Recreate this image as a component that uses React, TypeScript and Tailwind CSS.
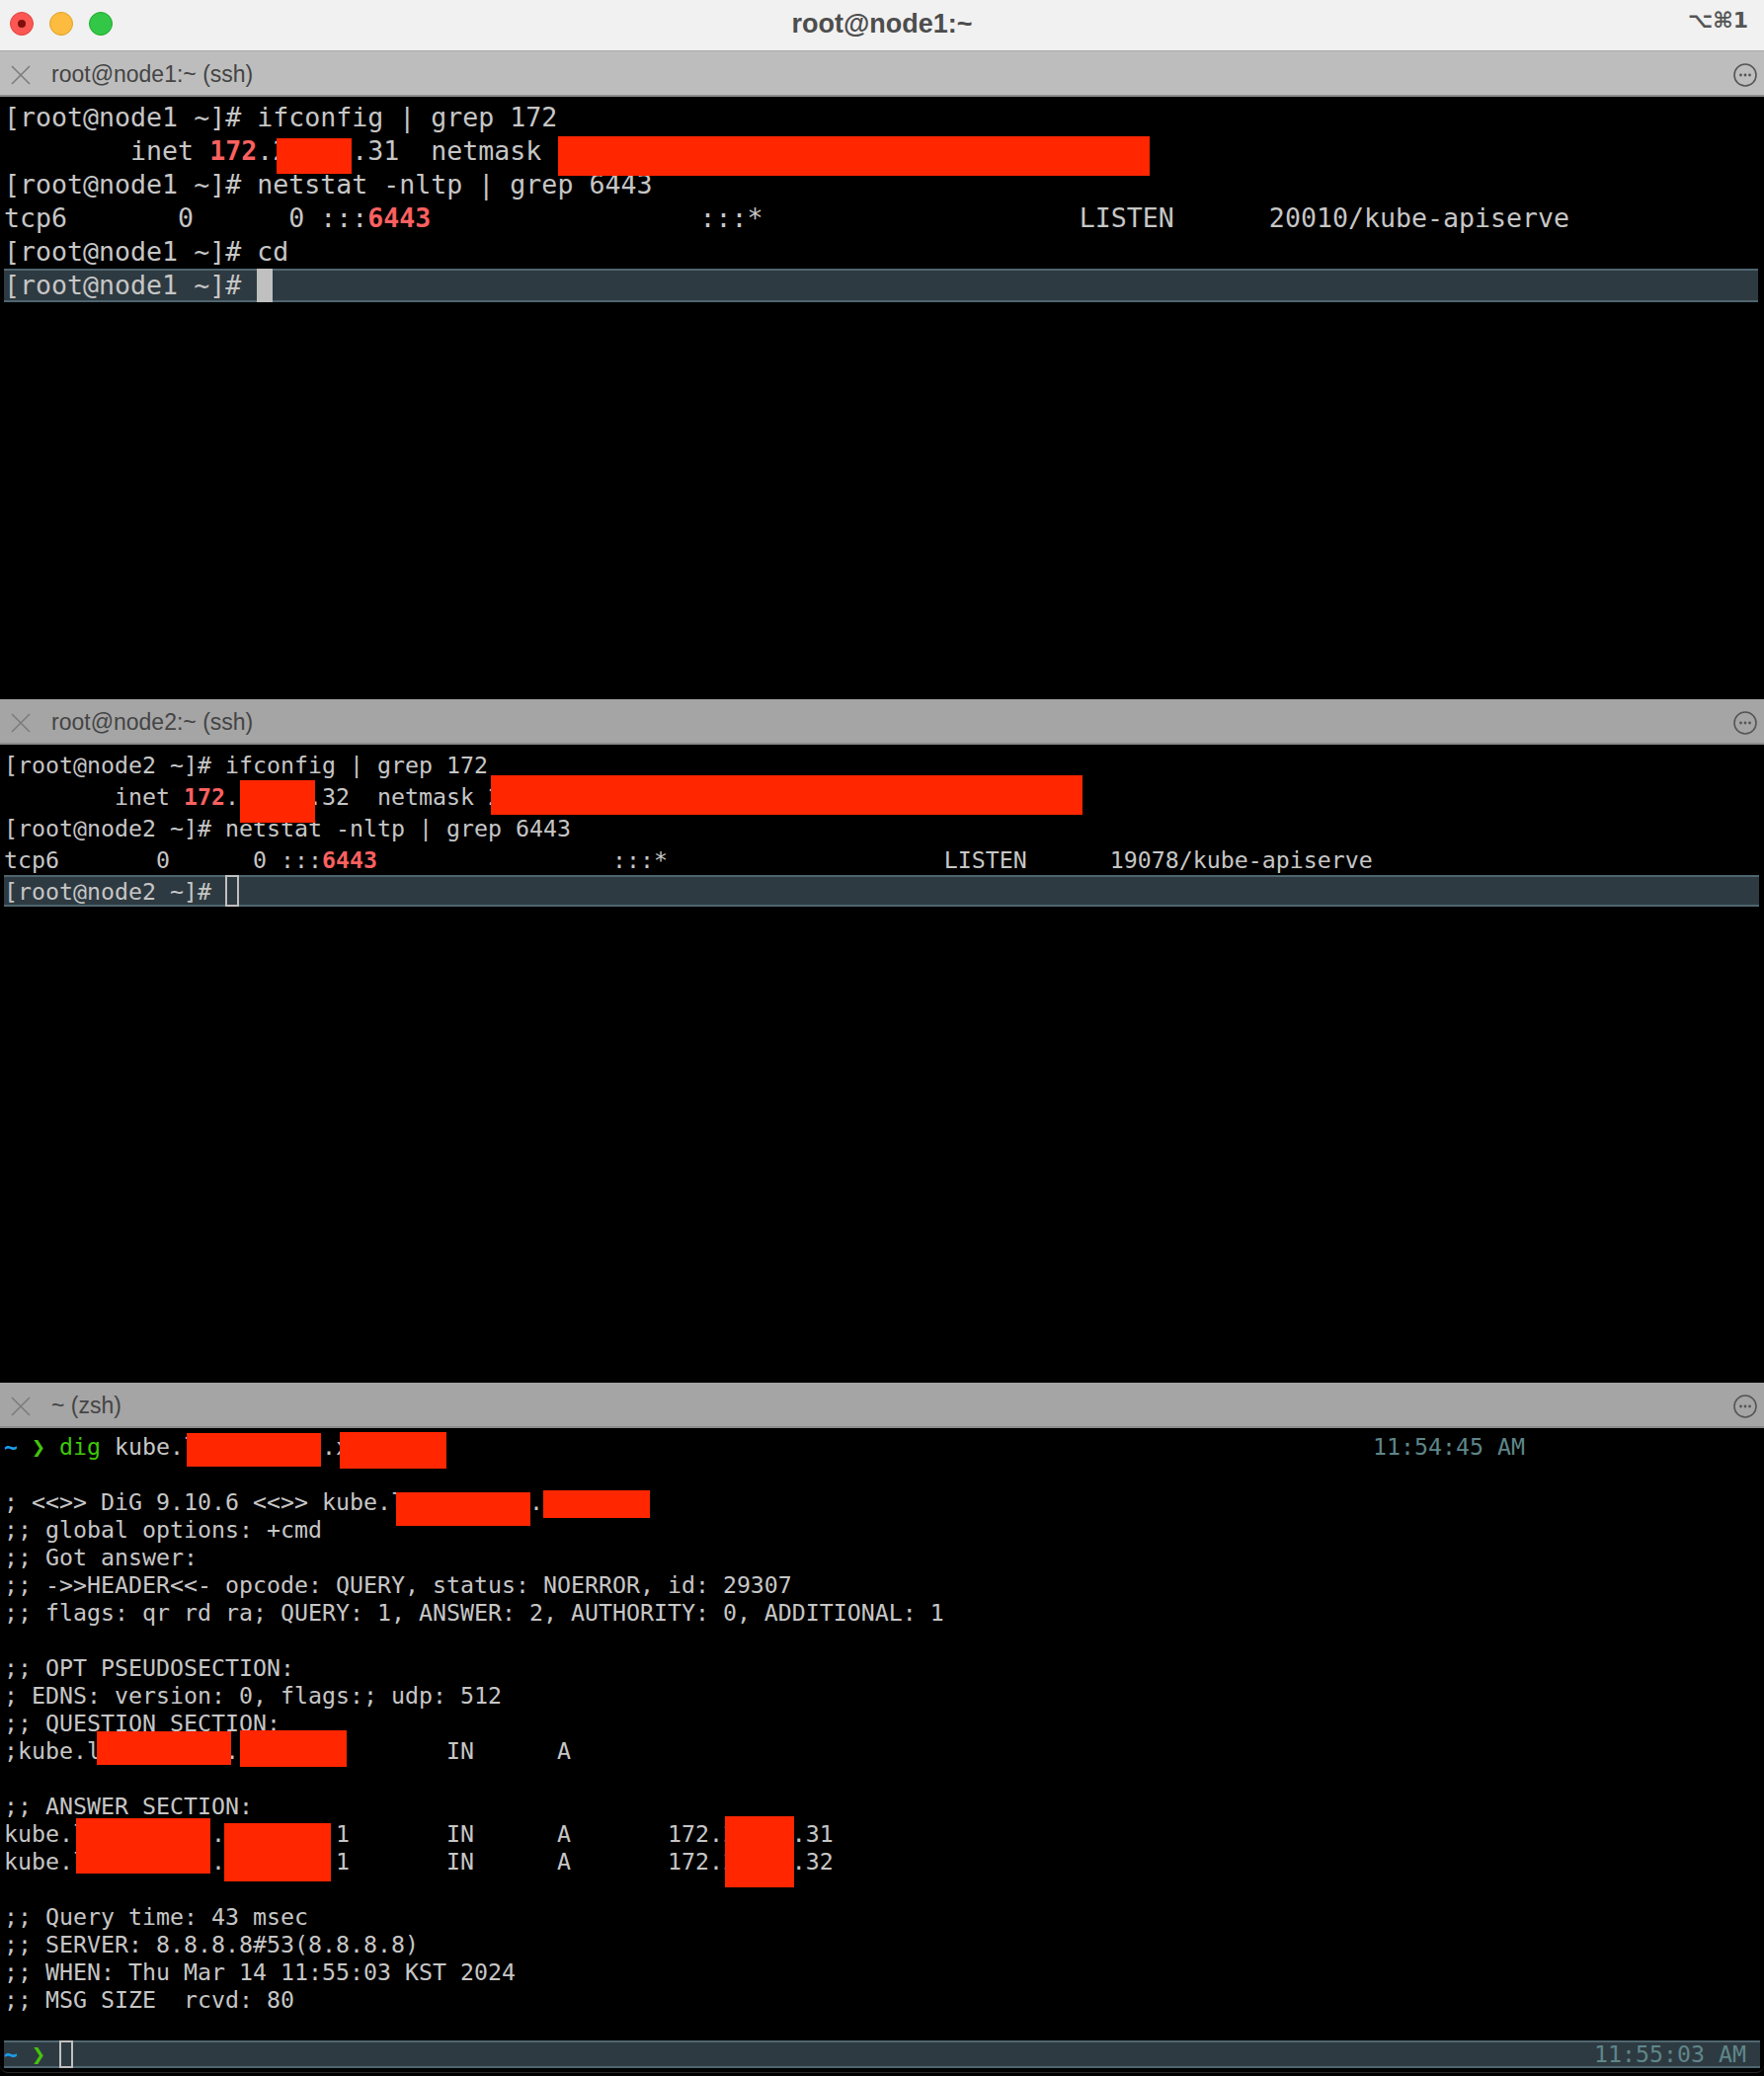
import type { ReactNode } from 'react';

function CloseIcon() {
  return (
    <svg width="22" height="22" viewBox="0 0 22 22" fill="none" stroke="#7c7c7c" strokeWidth="1.6">
      <path d="M2 2l18 18M20 2L2 20" />
    </svg>
  );
}

function MoreIcon() {
  return (
    <svg width="24" height="24" viewBox="0 0 24 24" fill="none">
      <circle cx="12" cy="12" r="11" stroke="#555" strokeWidth="1.6" />
      <circle cx="7.5" cy="12" r="1.4" fill="#555" />
      <circle cx="12" cy="12" r="1.4" fill="#555" />
      <circle cx="16.5" cy="12" r="1.4" fill="#555" />
    </svg>
  );
}

function TabBar({ title, active }: { title: string; active?: boolean }) {
  return (
    <div
      className={`flex h-[46px] items-center border-b-2 border-[#8c8c8c] pt-[3px] pr-[7px] pl-[10px] ${
        active ? 'bg-[#bdbdbd]' : 'bg-[#a5a5a5]'
      }`}
    >
      <CloseIcon />
      <span className="ml-[20px] font-['Liberation_Sans',sans-serif] text-[23px] text-[#444]">{title}</span>
      <div className="ml-auto">
        <MoreIcon />
      </div>
    </div>
  );
}

function Hot({ children }: { children: ReactNode }) {
  return <span className="font-bold text-[#fb6060]">{children}</span>;
}

function ZshPrompt() {
  return (
    <span>
      <span className="font-bold text-[#1c9ce6]">~</span> <span className="text-[#45c40c]">❯</span>{' '}
    </span>
  );
}

export default function App() {
  return (
    <div className="relative flex h-[2102px] w-[1786px] flex-col overflow-hidden bg-black font-['DejaVu_Sans_Mono',monospace] whitespace-pre text-[#c6c6c6]">
      {/* window title bar */}
      <div className="relative flex h-[52px] items-center border-b border-[#a8a8a8] bg-[#f1f1f1] pb-[3px] pl-[10px]">
        <div className="flex gap-[16px]">
          <div className="flex size-[24px] items-center justify-center rounded-full border border-[#e0443e] bg-[#fc5753]">
            <div className="size-[8px] rounded-full bg-[#7e0f0b]" />
          </div>
          <div className="size-[24px] rounded-full border border-[#dea123] bg-[#fdbc40]" />
          <div className="size-[24px] rounded-full border border-[#1aab29] bg-[#33c748]" />
        </div>
        <span className="absolute inset-x-0 text-center font-['Liberation_Sans',sans-serif] text-[27px] font-bold text-[#4d4d4d]">
          root@node1:~
        </span>
        <span className="absolute top-[6px] right-[16px] font-['DejaVu_Sans',sans-serif] text-[22px] leading-[30px] font-bold text-[#555]">
          ⌥⌘1
        </span>
      </div>

      {/* top pane */}
      <TabBar title="root@node1:~ (ssh)" active />
      <div className="h-[610px] pt-1 text-[26.6px] leading-[34px]">
        <div className="pl-1">[root@node1 ~]# ifconfig | grep 172</div>
        <div className="pl-1">
          {'        inet '}
          <Hot>172</Hot>
          {'.2    .31  netmask'}
        </div>
        <div className="pl-1">[root@node1 ~]# netstat -nltp | grep 6443</div>
        <div className="pl-1">
          {'tcp6       0      0 :::'}
          <Hot>6443</Hot>
          {'                 :::*                    LISTEN      20010/kube-apiserve'}
        </div>
        <div className="pl-1">[root@node1 ~]# cd</div>
        <div className="ml-1 flex h-[34px] w-[1776px] border-y-2 border-[#4f6670] bg-[#2e3a41] leading-[30px]">
          <span>[root@node1 ~]# </span>
          <div className="-my-[2px] h-[34px] w-[16px] bg-[#c0c0c0]" />
        </div>
      </div>

      {/* middle pane */}
      <TabBar title="root@node2:~ (ssh)" />
      <div className="h-[646px] pt-[5px] text-[23.25px] leading-[32px]">
        <div className="pl-1">[root@node2 ~]# ifconfig | grep 172</div>
        <div className="pl-1">
          {'        inet '}
          <Hot>172</Hot>
          {'.     .32  netmask 2'}
        </div>
        <div className="pl-1">[root@node2 ~]# netstat -nltp | grep 6443</div>
        <div className="pl-1">
          {'tcp6       0      0 :::'}
          <Hot>6443</Hot>
          {'                 :::*                    LISTEN      19078/kube-apiserve'}
        </div>
        <div className="-mt-px ml-1 flex h-[32px] w-[1777px] border-y-2 border-[#4f6670] bg-[#2e3a41] leading-[30px]">
          <span>[root@node2 ~]# </span>
          <div className="-my-[2px] h-[32px] w-[14px] border-2 border-[#c0c0c0]" />
        </div>
      </div>

      {/* bottom pane */}
      <TabBar title="~ (zsh)" />
      <div className="h-[656px] pt-[5px] text-[23.25px] leading-[28px]">
        <div className="flex pr-[242px] pl-1">
          <span>
            <ZshPrompt />
            <span className="text-[#3fc808]">dig</span> kube.l         .x
          </span>
          <span className="ml-auto text-[#5f8689]">11:54:45 AM</span>
        </div>
        <div className="h-[28px]" />
        <div className="pl-1">{'; <<>> DiG 9.10.6 <<>> kube.l         .'}</div>
        <div className="pl-1">;; global options: +cmd</div>
        <div className="pl-1">;; Got answer:</div>
        <div className="pl-1">;; -&gt;&gt;HEADER&lt;&lt;- opcode: QUERY, status: NOERROR, id: 29307</div>
        <div className="pl-1">;; flags: qr rd ra; QUERY: 1, ANSWER: 2, AUTHORITY: 0, ADDITIONAL: 1</div>
        <div className="h-[28px]" />
        <div className="pl-1">;; OPT PSEUDOSECTION:</div>
        <div className="pl-1">; EDNS: version: 0, flags:; udp: 512</div>
        <div className="pl-1">;; QUESTION SECTION:</div>
        <div className="pl-1">{';kube.l         .               IN      A'}</div>
        <div className="h-[28px]" />
        <div className="pl-1">;; ANSWER SECTION:</div>
        <div className="pl-1">{'kube.l         .        1       IN      A       172.2    .31'}</div>
        <div className="pl-1">{'kube.l         .        1       IN      A       172.2    .32'}</div>
        <div className="h-[28px]" />
        <div className="pl-1">;; Query time: 43 msec</div>
        <div className="pl-1">;; SERVER: 8.8.8.8#53(8.8.8.8)</div>
        <div className="pl-1">;; WHEN: Thu Mar 14 11:55:03 KST 2024</div>
        <div className="pl-1">;; MSG SIZE  rcvd: 80</div>
        <div className="h-[27px]" />
        <div className="ml-1 flex h-[28px] w-[1778px] border-y-2 border-[#4f6670] bg-[#2e3a41] pr-[14px] leading-[24px]">
          <ZshPrompt />
          <div className="-my-[2px] h-[28px] w-[14px] border-2 border-[#c0c0c0]" />
          <span className="ml-auto text-[#5f8689]">11:55:03 AM</span>
        </div>
      </div>

      {/* edge of the window, just visible under the last row */}
      <div className="absolute inset-x-0 bottom-[3px] h-[8px] rounded-b-[10px] border-b border-[#2a2a2a]" />

      {/* red marker blocks painted over the screenshot */}
      <div className="absolute top-[140px] left-[280px] h-[36px] w-[76px] bg-[#ff2600]" />
      <div className="absolute top-[138px] left-[565px] h-[40px] w-[599px] bg-[#ff2600]" />
      <div className="absolute top-[790px] left-[243px] h-[43px] w-[76px] bg-[#ff2600]" />
      <div className="absolute top-[785px] left-[497px] h-[40px] w-[599px] bg-[#ff2600]" />
      <div className="absolute top-[1451px] left-[189px] h-[34px] w-[136px] bg-[#ff2600]" />
      <div className="absolute top-[1450px] left-[344px] h-[37px] w-[108px] bg-[#ff2600]" />
      <div className="absolute top-[1511px] left-[401px] h-[34px] w-[136px] bg-[#ff2600]" />
      <div className="absolute top-[1509px] left-[550px] h-[28px] w-[108px] bg-[#ff2600]" />
      <div className="absolute top-[1753px] left-[98px] h-[34px] w-[136px] bg-[#ff2600]" />
      <div className="absolute top-[1752px] left-[243px] h-[37px] w-[108px] bg-[#ff2600]" />
      <div className="absolute top-[1841px] left-[77px] h-[56px] w-[136px] bg-[#ff2600]" />
      <div className="absolute top-[1846px] left-[227px] h-[59px] w-[108px] bg-[#ff2600]" />
      <div className="absolute top-[1839px] left-[734px] h-[72px] w-[70px] bg-[#ff2600]" />
    </div>
  );
}
